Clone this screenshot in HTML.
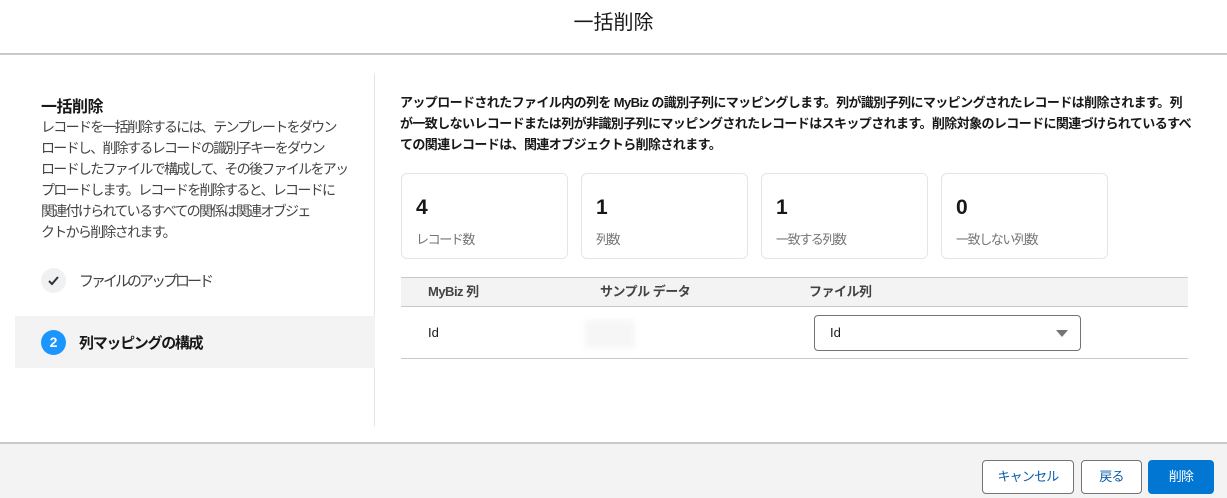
<!DOCTYPE html>
<html><head><meta charset="utf-8"><style>
*{box-sizing:border-box;margin:0;padding:0}
body{width:1227px;height:498px;background:#fff;font-family:"Liberation Sans","Noto Sans CJK JP",sans-serif;color:#181818;position:relative;overflow:hidden}
.hdr{position:absolute;left:0;top:0;width:1227px;height:55px;border-bottom:2px solid #c9c9c9;text-align:center;font-size:20px;line-height:46px}
.side{position:absolute;left:0;top:74px;width:375px;height:352px;border-right:1px solid #e5e5e5}
.abs{position:absolute;white-space:nowrap}
.foot{position:absolute;left:0;top:442px;width:1227px;height:56px;background:#f3f3f3;border-top:2px solid #c9c9c9}
.btn{position:absolute;top:16px;height:34px;border:1px solid #747474;border-radius:4px;background:#fff;font-size:13px;line-height:32px;text-align:center;color:#0b5cab;letter-spacing:-0.8px}
.card{position:absolute;top:173px;width:167px;height:86px;border:1px solid #e5e5e5;border-radius:6px}
.card b{position:absolute;left:14px;top:22px;font-size:21px;font-weight:bold}
.card span{position:absolute;left:14px;top:55px;font-size:13px;color:#747474;letter-spacing:-1.4px}
</style></head><body>
<div class="hdr">一括削除</div>
<div class="side">
<div class="abs" style="left:41px;top:19px;font-size:16px;font-weight:bold;letter-spacing:-0.5px">一括削除</div>
<div class="abs" style="left:41px;top:43px;font-size:14px;line-height:21px;color:#444;letter-spacing:-1.7px">レコードを一括削除するには、テンプレートをダウン<br>ロードし、削除するレコードの識別子キーをダウン<br>ロードしたファイルで構成して、その後ファイルをアッ<br>プロードします。レコードを削除すると、レコードに<br>関連付けられているすべての関係は関連オブジェ<br>クトから削除されます。</div>
<div class="abs" style="left:41px;top:194px;width:25px;height:25px;border-radius:50%;background:#f0f1f3"><svg width="25" height="25" viewBox="0 0 25 25" style="position:absolute;left:0;top:0"><path d="M8 13l3 3 6-7" fill="none" stroke="#333" stroke-width="2"/></svg></div>
<div class="abs" style="left:79px;top:196px;font-size:15px;color:#444;letter-spacing:-3px">ファイルのアップロード</div>
<div class="abs" style="left:15px;top:242px;width:360px;height:52px;background:#f3f3f3"></div>
<div class="abs" style="left:41px;top:256px;width:25px;height:25px;border-radius:50%;background:#1b96ff;color:#fff;text-align:center;line-height:25px;font-size:14px;font-weight:bold">2</div>
<div class="abs" style="left:79px;top:258px;font-size:15px;font-weight:bold;letter-spacing:-1.3px">列マッピングの構成</div>
</div>
<div class="abs" style="left:400px;top:92px;font-size:13px;font-weight:bold;line-height:21px;letter-spacing:-0.6px">アップロードされたファイル内の列を MyBiz の識別子列にマッピングします。列が識別子列にマッピングされたレコードは削除されます。列<br>が一致しないレコードまたは列が非識別子列にマッピングされたレコードはスキップされます。削除対象のレコードに関連づけられているすべ<br>ての関連レコードは、関連オブジェクトら削除されます。</div>
<div class="card" style="left:401px"><b>4</b><span>レコード数</span></div>
<div class="card" style="left:581px"><b>1</b><span>列数</span></div>
<div class="card" style="left:761px"><b>1</b><span>一致する列数</span></div>
<div class="card" style="left:941px"><b>0</b><span>一致しない列数</span></div>
<div class="abs" style="left:401px;top:277px;width:787px;height:30px;background:#f3f3f3;border-top:1px solid #c9c9c9;border-bottom:1px solid #c9c9c9;font-size:13px;font-weight:bold;color:#444;line-height:28px;letter-spacing:-0.5px">
<span class="abs" style="left:27px">MyBiz 列</span><span class="abs" style="left:199px">サンプル データ</span><span class="abs" style="left:408px">ファイル列</span></div>
<div class="abs" style="left:428px;top:325px;font-size:13px">Id</div>
<div class="abs" style="left:585px;top:320px;width:50px;height:28px;background:#f6f6f6;filter:blur(3px)"></div>
<div class="abs" style="left:814px;top:315px;width:267px;height:36px;border:1px solid #747474;border-radius:4px;font-size:13px;line-height:34px;padding-left:15px">Id<span class="abs" style="right:12px;top:14px;width:0;height:0;border-left:6px solid transparent;border-right:6px solid transparent;border-top:7px solid #747474"></span></div>
<div class="abs" style="left:401px;top:358px;width:787px;height:1px;background:#c9c9c9"></div>
<div class="foot">
<div class="btn" style="left:982px;width:92px">キャンセル</div>
<div class="btn" style="left:1081px;width:61px">戻る</div>
<div class="btn" style="left:1148px;width:66px;background:#0176d3;border-color:#0176d3;color:#fff">削除</div>
</div>
</body></html>
